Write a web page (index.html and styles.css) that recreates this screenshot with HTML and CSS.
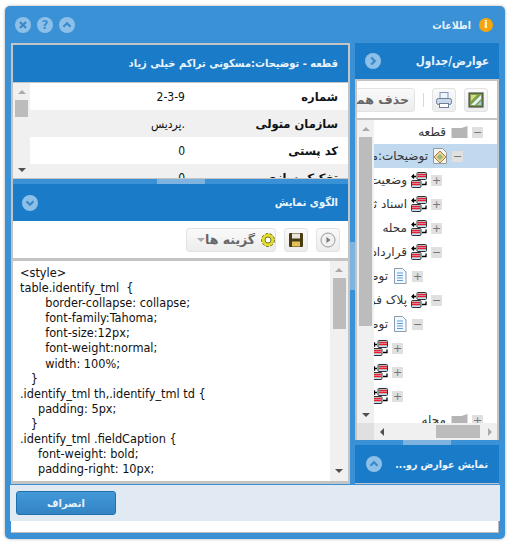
FILE: index.html
```html
<!DOCTYPE html>
<html lang="fa">
<head>
<meta charset="utf-8">
<title>اطلاعات</title>
<link rel="stylesheet" href="styles.css">
</head>
<body>
<div class="window">
  <header class="titlebar">
    <div class="tools">
      <span class="circle"><svg viewBox="0 0 16 16"><path d="M4.500 4.500l7 7M11.500 4.500l-7 7" class="ic"/></svg></span>
      <span class="circle q">?</span>
      <span class="circle"><svg viewBox="0 0 16 16"><path d="M4 10l4-4 4 4" class="ic"/></svg></span>
    </div>
    <div class="title"><span class="info">i</span><span>اطلاعات</span></div>
  </header>
  <div class="body">
    <aside class="side">
      <div class="head side-head"><span>عوارض/جداول</span><span class="circle"><svg viewBox="0 0 16 16"><path d="M6 4l4 4-4 4" class="ic"/></svg></span></div>
      <div class="side-tools">
        <span class="btn sq"><svg viewBox="0 0 16 16" width="16" height="16"><rect x="1" y="1" width="14" height="14" fill="#7fa04a" stroke="#333"/><path d="M3 13L13 3v4L7 13z" fill="#e8f2f8"/><path d="M3 3h6L3 9z" fill="#d8dc80"/><path d="M13 9v4H9z" fill="#9fc5e8"/></svg></span>
        <span class="btn sq"><svg viewBox="0 0 18 18" width="18" height="18"><rect x="5" y="1.500" width="8" height="7" fill="#eef4fb" stroke="#7f97b5"/><rect x="1.500" y="7.500" width="15" height="6" rx="2" fill="#c9d9ec" stroke="#6f7f95"/><rect x="4.500" y="12.500" width="9" height="4" fill="#fff" stroke="#6f7f95"/></svg></span>
        <span class="sep"></span>
        <span class="btn del">حذف همه</span>
      </div>
      <div class="tree-wrap">
        <div class="tree-main">
          <div class="vbar"><span class="arrow up"></span><span class="thumb tree-thumb"></span><span class="arrow down"></span></div>
          <ul class="tree">
            <li class="row"><span class="tg">−</span><svg class="fold" viewBox="0 0 16 12"><path d="M0 2h10l6-2v12H0z" fill="#b5b5b5"/></svg><span class="lbl">قطعه</span></li>
            <li class="row sel l1"><span class="tg">−</span><svg class="ico" viewBox="0 0 16 16"><path d="M1.500.5h9l4 4v11h-13z" fill="#f4f4f0" stroke="#999"/><path d="M2 9l6-6 6 6-6 6z" fill="#e9cf90" stroke="#a08850"/><path d="M5 9l3-3 3 3-3 3z" fill="#9ab77a"/></svg><span class="lbl">توضیحات:مسکونی</span></li>
            <li class="row l2"><span class="tg">+</span><svg class="ico" viewBox="0 0 16 16"><use href="#lay"/></svg><span class="lbl">وضعیت</span></li>
            <li class="row l2"><span class="tg">+</span><svg class="ico" viewBox="0 0 16 16"><use href="#lay"/></svg><span class="lbl">اسناد ثبتی</span></li>
            <li class="row l2"><span class="tg">+</span><svg class="ico" viewBox="0 0 16 16"><use href="#lay"/></svg><span class="lbl">محله</span></li>
            <li class="row l2"><span class="tg">−</span><svg class="ico" viewBox="0 0 16 16"><use href="#lay"/></svg><span class="lbl">قرارداد</span></li>
            <li class="row l3"><span class="tg">+</span><svg class="ico" viewBox="0 0 16 16"><use href="#doc"/></svg><span class="lbl">توضیحات</span></li>
            <li class="row l2"><span class="tg">−</span><svg class="ico" viewBox="0 0 16 16"><use href="#lay"/></svg><span class="lbl">پلاک فرعی</span></li>
            <li class="row l3"><span class="tg">−</span><svg class="ico" viewBox="0 0 16 16"><use href="#doc"/></svg><span class="lbl">توضیحات</span></li>
            <li class="row l4"><span class="tg">+</span><svg class="ico" viewBox="0 0 16 16"><use href="#lay"/></svg></li>
            <li class="row l4"><span class="tg">+</span><svg class="ico" viewBox="0 0 16 16"><use href="#lay"/></svg></li>
            <li class="row l4"><span class="tg">+</span><svg class="ico" viewBox="0 0 16 16"><use href="#lay"/></svg></li>
            <li class="row"><span class="tg">+</span><svg class="fold" viewBox="0 0 16 12"><path d="M0 2h10l6-2v12H0z" fill="#b5b5b5"/></svg><span class="lbl">محله</span></li>
          </ul>
        </div>
        <div class="hbar"><span class="corner"></span><span class="arrow left"></span><span class="thumb tree-hthumb"></span><span class="arrow right"></span></div>
      </div>
      <div class="split-h"><span class="grip"></span></div>
      <div class="head side-foot"><span>نمایش عوارض رو...</span><span class="circle"><svg viewBox="0 0 16 16"><path d="M4 10l4-4 4 4" class="ic"/></svg></span></div>
    </aside>
    <div class="split-v"><span class="vgrip"></span></div>
    <main class="main">
      <div class="head info-head">قطعه - توضیحات:مسکونی تراکم خیلی زیاد</div>
      <div class="info-table">
        <div class="vbar"><span class="arrow up"></span><span class="thumb info-thumb"></span><span class="arrow down"></span></div>
        <table>
          <tr><th>شماره</th><td>2-3-9</td></tr>
          <tr class="alt"><th>سازمان متولی</th><td class="small">.پردیس</td></tr>
          <tr><th>کد پستی</th><td>0</td></tr>
          <tr class="alt"><th>تفکیک سازی</th><td>0</td></tr>
        </table>
      </div>
      <div class="split-h dark"><span class="grip"></span></div>
      <div class="head tpl-head"><span>الگوی نمایش</span><span class="circle"><svg viewBox="0 0 16 16"><path d="M4 6l4 4 4-4" class="ic"/></svg></span></div>
      <div class="tpl-tools">
        <span class="btn opts"><span class="caret"></span><span class="opts-text">گزینه ها</span><svg class="gear" viewBox="0 0 16 16"><circle cx="8" cy="8" r="6.500" fill="#e3dc2a" stroke="#77752a" stroke-dasharray="3 1.500"/><circle cx="8" cy="8" r="3" fill="#fff" stroke="#77752a"/></svg></span>
        <span class="btn sq"><svg viewBox="0 0 16 16" width="16" height="16"><rect x="1" y="1" width="14" height="14" rx="1" fill="#4a3c12"/><rect x="4" y="1.500" width="8" height="5" fill="#e8e6d8"/><rect x="4" y="9.500" width="8" height="5" fill="#e3c15a"/></svg></span>
        <span class="btn sq"><svg viewBox="0 0 16 16" width="16" height="16"><circle cx="8" cy="8" r="7" fill="#f0f0f0" stroke="#9a9a9a"/><path d="M6.500 5l4 3-4 3z" fill="#777"/></svg></span>
      </div>
      <div class="code">
        <pre>&lt;style&gt;
table.identify_tml  {
       border-collapse: collapse;
       font-family:Tahoma;
       font-size:12px;
       font-weight:normal;
       width: 100%;
   }
.identify_tml th,.identify_tml td {
     padding: 5px;
   }
.identify_tml .fieldCaption {
     font-weight: bold;
     padding-right: 10px;</pre>
        <div class="vbar code-bar"><span class="arrow up"></span><span class="thumb code-thumb"></span><span class="arrow down"></span></div>
      </div>
    </main>
  </div>
  <footer class="footer"><button class="cancel">انصراف</button></footer>
  <div class="bottom"></div>
</div>
<svg width="0" height="0" class="defs">
  <defs>
    <g id="lay">
      <rect x="6" y="0.500" width="9.500" height="7" rx="1" fill="#bfe0f5" stroke="#333"/><path d="M7 2.500h8M7 4.500h8" stroke="#e8202a" stroke-width="1.500"/>
      <rect x="0.500" y="8.500" width="9.500" height="7" rx="1" fill="#bfe0f5" stroke="#333"/><path d="M1 10.500h8M1 12.500h8" stroke="#e8202a" stroke-width="1.500"/>
      <path d="M1 4.500h4M3 2.500l-2 2 2 2M11 12.500h4v-3" fill="none" stroke="#000" stroke-width="1.300"/>
    </g>
    <g id="doc">
      <path d="M2.500.5h8l3.500 3.500v11.500H2.500z" fill="#f4f9ff" stroke="#8a9bb0"/><path d="M5 5h6M5 7.500h6M5 10h6M5 12.500h6" stroke="#5f9ed8"/>
    </g>
  </defs>
</svg>
</body>
</html>
```
FILE: styles.css
```css
* { box-sizing: border-box; }
html, body { margin: 0; padding: 0; background: #fff; }
body { width: 510px; height: 544px; padding: 6px 5px 5px; font-family: "DejaVu Sans", sans-serif; }
.defs { position: absolute; }
.window { width: 500px; height: 533px; background: #3a91d5; border-radius: 5px; padding: 0 6px 6px; display: flex; flex-direction: column; box-shadow: 0 0 3px rgba(0,0,0,.35); }
.titlebar { height: 37px; flex: none; display: flex; justify-content: space-between; align-items: center; padding: 0 4px; color: #e8f2fb; }
.tools { display: flex; gap: 6px; }
.circle { width: 16px; height: 16px; border-radius: 50%; background: #8dc0e8; display: inline-flex; align-items: center; justify-content: center; color: #3a91d5; font-size: 12px; font-weight: bold; flex: none; }
.circle svg { width: 14px; height: 14px; }
.ic { fill: none; stroke: #3a88c8; stroke-width: 2.500; }
.title { display: flex; align-items: center; gap: 8px; font: bold 10.500px "DejaVu Sans Condensed", "DejaVu Sans", sans-serif; padding-right: 2px; direction: rtl; }
.info { width: 14px; height: 14px; border-radius: 50%; background: #f5a60c; color: #fff; font-size: 11px; display: flex; align-items: center; justify-content: center; }
.body { height: 441px; flex: none; display: flex; flex-direction: row-reverse; }
.head { background: #1a7bc9; color: #eaf4fc; font: bold 11.500px "DejaVu Sans Condensed", "DejaVu Sans", sans-serif; direction: rtl; display: flex; align-items: center; white-space: nowrap; flex: none; }
.side { width: 144px; flex: none; display: flex; flex-direction: column; background: #c4c4c4; padding-bottom: 1px; }
.side-head { height: 36px; padding: 0 10px; justify-content: space-between; }
.side-tools { height: 37px; margin: 2px 2px 0; background: #fff; display: flex; align-items: center; direction: rtl; padding-right: 9px; gap: 8px; overflow: hidden; flex: none; }
.btn { height: 24px; border: 1px solid #e3e3e3; border-radius: 3px; background: linear-gradient(#fafafa, #ececec); display: inline-flex; align-items: center; justify-content: center; flex: none; color: #666; font-size: 12.500px; font-weight: bold; }
.sq { width: 24px; }
.sep { width: 1px; height: 14px; background: #d8d8d8; flex: none; }
.del { width: 60px; justify-content: flex-start; padding-right: 5px; white-space: nowrap; }
.tree-wrap { margin: 2px 2px 0; flex: 1; min-height: 0; background: #fff; display: flex; flex-direction: column; overflow: hidden; }
.tree-main { flex: 1; min-height: 0; display: flex; overflow: hidden; }
.vbar { width: 17px; flex: none; background: #f0f0f0; display: flex; flex-direction: column; align-items: center; padding: 7px 0 6px; }
.thumb { background: #bcbcbc; display: block; margin-top: 6px; }
.arrow { width: 0; height: 0; border: 4px solid transparent; display: block; flex: none; }
.up { border-bottom: 4px solid #aaa; border-top: 0; }
.down { border-top: 4px solid #505050; border-bottom: 0; margin-top: auto; }
.left { border-right: 4px solid #505050; border-left: 0; }
.right { border-left: 4px solid #aaa; border-right: 0; margin-left: auto; }
.tree-thumb { width: 13px; height: 189px; }
.tree { list-style: none; margin: 0; padding: 0; direction: rtl; flex: 1; min-width: 0; overflow: hidden; }
.row { height: 24px; display: flex; align-items: center; gap: 4px; white-space: nowrap; font-size: 12px; color: #333; padding-right: 14px; }
.sel { background: #c0d9ee; }
.l1 { padding-right: 34px; }
.l2 { padding-right: 55px; }
.l3 { padding-right: 74px; }
.l4 { padding-right: 94px; }
.tg { width: 11px; height: 11px; background: #e0e0e0; color: #777; font-size: 11px; line-height: 11px; text-align: center; flex: none; }
.fold { width: 17px; height: 12px; flex: none; margin-left: 1px; }
.ico { width: 16px; height: 16px; flex: none; }
.lbl { flex: none; }
.hbar { height: 17px; flex: none; background: #f0f0f0; display: flex; align-items: center; padding-right: 5px; }
.corner { width: 17px; height: 17px; background: #e0e0e0; flex: none; }
.hbar .left { margin-left: 6px; }
.tree-hthumb { width: 44px; height: 13px; margin: 0 0 0 52px; }
.split-h { height: 5px; flex: none; background: #3a91d5; display: flex; justify-content: center; }
.grip { width: 48px; height: 5px; background: #7fb3df; display: block; }
.dark { margin-top: 1px; }
.side-foot { height: 38px; padding: 0 11px; justify-content: space-between; font-size: 10.500px; }
.split-v { width: 5px; flex: none; display: flex; align-items: center; background: #3a91d5; padding-top: 4px; }
.vgrip { width: 5px; height: 48px; background: #7fb3df; display: block; }
.main { width: 339px; flex: none; display: flex; flex-direction: column; background: #c4c4c4; padding: 2px 2px 3px; }
.info-head { height: 37px; padding-right: 10px; margin-bottom: 1px; font-size: 11px; }
.info-table { height: 95px; flex: none; display: flex; overflow: hidden; background: #fff; }
table { flex: 1; border-collapse: collapse; direction: rtl; font-size: 11.500px; height: 108px; }
tr { height: 27px; }
.alt { background: #f0f0f0; }
th { text-align: right; padding: 0 10px; width: 163px; color: #111; white-space: nowrap; }
td { text-align: right; padding: 0; color: #111; font: 12px "DejaVu Sans Condensed", "DejaVu Sans", sans-serif; direction: rtl; }
td.small { font-size: 12px; }
.info-thumb { width: 13px; height: 17px; }
.tpl-head { height: 37px; padding: 0 10px 0 9px; justify-content: space-between; font-size: 11px; }
.tpl-tools { height: 37px; background: #fff; display: flex; align-items: center; padding-left: 173px; gap: 8px; flex: none; }
.opts { width: 90px; direction: ltr; justify-content: flex-start; padding: 0 3px 0 10px; }
.opts-text { white-space: nowrap; direction: rtl; margin: 0 5px 0 auto; }
.gear { width: 16px; height: 16px; flex: none; }
.caret { width: 0; height: 0; border: 4px solid transparent; border-top: 4px solid #aaa; border-bottom: 0; flex: none; }
.code { flex: 1; min-height: 0; margin-top: 3px; background: #fff; display: flex; overflow: hidden; }
pre { flex: 1; margin: 0; padding: 4px 0 0 7px; font: 12.600px/15.100px "DejaVu Sans Condensed", "DejaVu Sans", sans-serif; color: #111; white-space: pre; overflow: hidden; }
.code-bar { width: 18px; padding-bottom: 8px; }
.code-thumb { width: 13px; height: 51px; }
.footer { height: 36px; flex: none; background: #e1e9f2; padding: 6px; margin: 1px -1px 0; }
.cancel { width: 100px; height: 24px; display: block; border: 1px solid #1f71ad; border-radius: 3px; background: linear-gradient(#4599d8, #3284c5); color: #e8f2fb; font: bold 11px "DejaVu Sans Condensed", "DejaVu Sans", sans-serif; direction: rtl; padding: 0; }
.bottom { flex: 1; background: #fff; border-bottom: 1px solid #bbb; border-right: 1px solid #bbb; }
```
